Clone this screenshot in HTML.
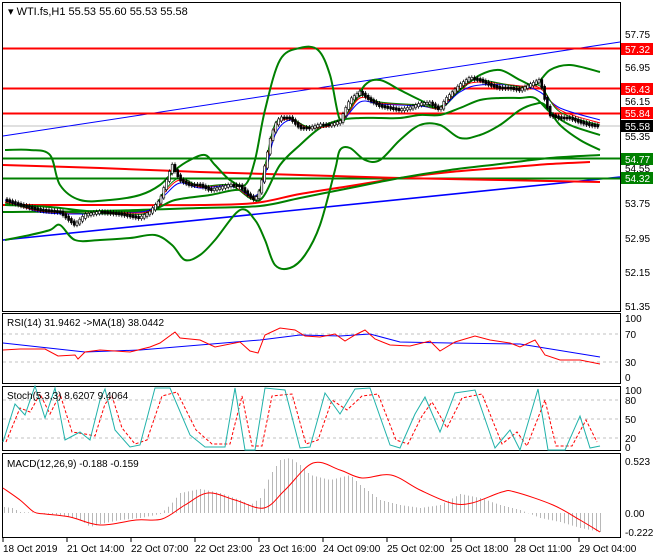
<!DOCTYPE html>
<html><head><meta charset="utf-8"><style>
html,body{margin:0;padding:0;background:#fff;}
svg{display:block;font-family:"Liberation Sans",sans-serif;}
</style></head><body>
<svg id="s" width="660" height="560" viewBox="0 0 660 560" xmlns="http://www.w3.org/2000/svg">
<rect width="660" height="560" fill="#fff"/>
<g fill="none" stroke="#000" stroke-width="1">
<rect x="2.5" y="2.5" width="618" height="309"/>
<rect x="2.5" y="313.5" width="618" height="70"/>
<rect x="2.5" y="386.5" width="618" height="64"/>
<rect x="2.5" y="453.5" width="618" height="84"/>
</g>
<line x1="3" y1="126" x2="620" y2="126" stroke="#c0c0c0"/>
<line x1="3" y1="136" x2="620" y2="42" stroke="#0000ff" stroke-width="1"/>
<line x1="3" y1="240" x2="620" y2="177" stroke="#0000ff" stroke-width="1.6"/>
<g stroke-width="2" fill="none">
<line x1="3" y1="48.5" x2="620" y2="48.5" stroke="#ff0000"/>
<line x1="3" y1="88.5" x2="620" y2="88.5" stroke="#ff0000"/>
<line x1="3" y1="113.5" x2="620" y2="113.5" stroke="#ff0000"/>
<line x1="3" y1="158.5" x2="620" y2="158.5" stroke="#008000"/>
<line x1="3" y1="178.5" x2="620" y2="178.5" stroke="#008000"/>
<polyline class="sm" stroke="#ff0000" points="3,165 100,168 200,172 300,175 400,178 500,180 600,182"/>
<polyline class="sm" stroke="#ff0000" points="3,205 100,205 200,205 255,203 300,194 350,186 400,178 450,172 500,168 550,164 590,162"/>
<polyline class="sm" stroke="#008000" points="3,212 100,211 200,208 260,206 300,198 350,188 400,178 450,170 500,164 550,158 600,155"/>
<polyline class="sm" stroke="#008000" points="5,150 30,150 50,155 60,185 80,200 110,200 140,195 160,185 175,170 190,160 205,155 215,165 230,180 245,185 255,160 265,110 280,60 300,48 318,50 330,75 340,120 350,110 365,85 380,80 400,90 420,100 440,108 460,90 480,75 500,70 520,80 535,85 550,70 570,65 600,72"/>
<polyline class="sm" stroke="#008000" points="5,240 30,235 50,230 60,225 75,240 100,240 130,238 155,235 172,245 185,260 200,255 215,240 240,210 255,220 265,240 275,265 290,268 305,255 320,225 335,170 340,150 350,148 365,160 380,160 400,140 420,125 440,125 460,138 480,135 500,125 520,110 535,104 545,105 560,125 580,140 600,150"/>
<polyline class="sm" stroke="#008000" points="5,205 50,207 100,212 150,210 175,200 210,195 240,190 260,200 280,165 300,145 320,128 340,120 360,118 380,118 400,118 420,115 440,115 460,108 480,100 500,98 520,98 535,98 550,112 570,125 600,135"/>
</g>
<g fill="none" stroke-width="1">
<polyline class="sm" stroke="#0000ff" points="5,200 40,212 80,214 120,213 150,210 165,195 180,183 200,188 230,186 255,196 265,175 275,135 290,120 310,128 340,122 360,102 380,104 420,106 440,108 460,92 480,85 520,86 540,92 560,108 600,120"/>
<polyline class="sm" stroke="#ff0000" points="5,202 40,211 80,213 120,213 150,211 165,192 180,180 200,187 230,185 255,198 265,170 275,128 290,119 310,128 340,122 360,98 380,103 420,105 440,108 460,88 480,82 520,86 540,88 560,110 600,123"/>
<polyline class="sm" stroke="#008000" points="5,203 40,210 80,213 120,214 150,212 165,190 180,178 200,186 230,185 255,199 265,165 275,124 290,118 310,127 340,121 360,96 380,102 420,105 440,107 460,86 480,80 520,87 540,86 560,112 600,125"/>
</g>
<g id="candles"></g>
<text x="8" y="15" font-size="11" fill="#000">▾ WTI.fs,H1  55.53 55.60 55.53 55.58</text>
<g font-size="10" fill="#000">
<text x="625" y="38">57.75</text><text x="625" y="71">56.95</text><text x="625" y="105">56.15</text><text x="625" y="140">55.35</text><text x="625" y="172">54.55</text><text x="625" y="207">53.75</text><text x="625" y="242">52.95</text><text x="625" y="276">52.15</text><text x="625" y="310">51.35</text>
</g>
<g font-size="10" fill="#fff">
<rect x="621" y="43" width="32" height="12" fill="#ff0000"/><text x="625" y="53">57.32</text>
<rect x="621" y="83" width="32" height="12" fill="#ff0000"/><text x="625" y="93">56.43</text>
<rect x="621" y="107" width="32" height="12" fill="#ff0000"/><text x="625" y="117">55.84</text>
<rect x="621" y="120" width="32" height="12" fill="#000"/><text x="625" y="130">55.58</text>
<rect x="621" y="153" width="32" height="12" fill="#008000"/><text x="625" y="163">54.77</text>
<rect x="621" y="172" width="32" height="12" fill="#008000"/><text x="625" y="182">54.32</text>
</g>
<g stroke="#c0c0c0" stroke-dasharray="3,3"><line x1="3" y1="334" x2="620" y2="334"/><line x1="3" y1="362" x2="620" y2="362"/></g>
<polyline fill="none" stroke="#0000ff" points="3,343 85,352 140,350 260,340 300,335 340,336 370,334 400,342 450,343 520,344 600,357"/>
<polyline fill="none" stroke="#ff0000" points="3,350 20,349 45,349 58,356 75,355 78,359 85,352 100,350 130,352 150,347 160,343 175,332 180,338 200,340 215,347 240,342 250,351 258,353 265,335 280,328 295,330 305,336 320,337 335,334 345,341 355,335 365,330 375,339 390,345 410,346 430,341 440,351 455,342 475,336 490,340 510,343 520,347 535,340 545,355 560,360 580,360 600,364"/>
<text x="7" y="326" font-size="10">RSI(14) 31.9462  -&gt;MA(18) 38.0442</text>
<g font-size="10"><text x="625" y="322">100</text><text x="625" y="338">70</text><text x="625" y="366">30</text><text x="625" y="381">0</text></g>
<g stroke="#c0c0c0" stroke-dasharray="3,3"><line x1="3" y1="400" x2="620" y2="400"/><line x1="3" y1="419" x2="620" y2="419"/><line x1="3" y1="438" x2="620" y2="438"/></g>
<polyline fill="none" stroke="#ff0000" stroke-dasharray="3,2" points="6,442 20,408 30,412 40,394 50,414 60,394 72,432 85,434 95,436 105,404 112,396 122,428 135,444 147,440 162,396 177,392 196,430 212,444 230,444 242,396 252,446 262,446 272,396 292,394 306,444 318,440 332,400 347,410 362,396 378,394 396,440 408,444 422,416 432,402 447,428 462,398 482,394 502,444 517,432 527,446 545,400 556,446 572,446 586,420 597,442"/>
<polyline fill="none" stroke="#20b2aa" points="3,442 15,404 25,415 35,386 45,418 55,388 65,440 80,432 90,440 100,400 105,389 115,430 130,447 140,445 155,388 170,388 190,435 205,447 225,447 235,388 245,450 255,450 265,388 285,390 300,448 310,447 325,393 340,414 355,389 370,388 390,445 400,448 415,414 425,397 440,432 455,393 475,390 495,448 510,430 520,450 538,389 548,450 565,450 580,416 590,448 600,446"/>
<text x="7" y="399" font-size="10">Stoch(5,3,3) 8.6207 9.4064</text>
<g font-size="10"><text x="625" y="394">100</text><text x="625" y="404">80</text><text x="625" y="423">50</text><text x="625" y="442">20</text><text x="625" y="451">0</text></g>
<g id="hist" stroke="#b8b8b8" stroke-width="1"></g>
<polyline class="sm" fill="none" stroke="#ff0000" points="3,488 20,500 34,512 45,514 70,517 100,525 136,520 162,519 185,505 208,493 235,500 264,508 285,490 313,463 340,470 362,478 391,475 420,490 451,503 472,503 502,492 515,492 553,505 580,520 600,532"/>
<text x="7" y="467" font-size="10">MACD(12,26,9) -0.188 -0.159</text>
<g font-size="10"><text x="625" y="465">0.523</text><text x="625" y="517">0.00</text><text x="625" y="536">-0.222</text></g>
<g stroke="#000"><line x1="3" y1="538" x2="3" y2="542"/><line x1="67" y1="538" x2="67" y2="542"/><line x1="131" y1="538" x2="131" y2="542"/><line x1="195" y1="538" x2="195" y2="542"/><line x1="259" y1="538" x2="259" y2="542"/><line x1="323" y1="538" x2="323" y2="542"/><line x1="387" y1="538" x2="387" y2="542"/><line x1="451" y1="538" x2="451" y2="542"/><line x1="515" y1="538" x2="515" y2="542"/><line x1="579" y1="538" x2="579" y2="542"/></g>
<g font-size="10"><text x="3" y="552">18 Oct 2019</text><text x="67" y="552">21 Oct 14:00</text><text x="131" y="552">22 Oct 07:00</text><text x="195" y="552">22 Oct 23:00</text><text x="259" y="552">23 Oct 16:00</text><text x="323" y="552">24 Oct 09:00</text><text x="387" y="552">25 Oct 02:00</text><text x="451" y="552">25 Oct 18:00</text><text x="515" y="552">28 Oct 11:00</text><text x="579" y="552">29 Oct 04:00</text></g>
</svg>
<script>
(function(){
var NS='http://www.w3.org/2000/svg';
function interp(k,x){var i=0;while(i<k.length-2&&k[i+1][0]<x)i++;var a=k[i],b=k[i+1];var t=(x-a[0])/(b[0]-a[0]);t=Math.max(0,Math.min(1,t));return a[1]+(b[1]-a[1])*t;}
function mk(n,at){var e=document.createElementNS(NS,n);for(var q in at)e.setAttribute(q,at[q]);return e;}
var pls=document.querySelectorAll('polyline.sm');
for(var j=0;j<pls.length;j++){var pl=pls[j];var p=pl.getAttribute('points').trim().split(/\s+/).map(function(s){return s.split(',').map(Number);});
var d='M'+p[0][0]+','+p[0][1];for(var i=0;i<p.length-1;i++){var p0=p[i-1]||p[i],p1=p[i],p2=p[i+1],p3=p[i+2]||p2;
d+=' C'+(p1[0]+(p2[0]-p0[0])/6)+','+(p1[1]+(p2[1]-p0[1])/6)+' '+(p2[0]-(p3[0]-p1[0])/6)+','+(p2[1]-(p3[1]-p1[1])/6)+' '+p2[0]+','+p2[1];}
var path=mk('path',{d:d,fill:'none',stroke:pl.getAttribute('stroke'),'stroke-width':getComputedStyle(pl).strokeWidth});pl.parentNode.replaceChild(path,pl);}
var c=[[5,200],[20,205],[40,210],[60,212],[75,225],[85,215],[100,212],[120,214],[140,218],[150,212],[160,200],[165,185],[172,165],[180,180],[190,185],[200,185],[210,190],[220,188],[230,185],[240,186],[248,195],[255,200],[260,190],[265,165],[270,140],[275,125],[280,118],[290,118],[300,128],[310,128],[320,125],[330,125],[340,122],[345,110],[350,100],[360,92],[370,100],[380,106],[390,108],[400,110],[410,108],[420,104],[430,103],[440,110],[445,100],[450,95],[460,85],[470,78],[480,80],[490,85],[500,88],[510,88],[520,90],[530,85],[540,80],[545,100],[550,115],[560,118],[570,118],[580,122],[590,125],[598,126]];
var cg=document.getElementById('candles');
for(var x=7;x<=598;x+=2.8){var y0=interp(c,x-2.8),y1=interp(c,x);var tp=Math.min(y0,y1)-1,bt=Math.max(y0,y1)+1;var up=y1<y0;
cg.appendChild(mk('line',{x1:x,x2:x,y1:tp-2,y2:bt+2,stroke:'#000','stroke-width':0.8}));
cg.appendChild(mk('rect',{x:x-1,y:tp,width:2,height:Math.max(1,bt-tp),fill:up?'#fff':'#000',stroke:'#000','stroke-width':0.6}));}
var k=[[4,507],[12,508],[20,512],[40,513],[60,515],[80,520],[90,527],[100,524],[120,520],[140,518],[160,514],[170,505],[180,493],[200,489],[220,493],[240,500],[250,505],[260,498],[270,475],[280,460],[290,458],[300,465],[310,475],[330,480],[350,475],[360,485],[380,500],[400,505],[420,508],[440,505],[460,494],[480,498],[500,505],[520,510],[540,518],[560,522],[580,528],[600,532]];
var g=document.getElementById('hist');
for(var x2=4;x2<=600;x2+=4){g.appendChild(mk('line',{x1:x2+.5,x2:x2+.5,y1:513,y2:interp(k,x2)}));}
})();
</script>
</body></html>
